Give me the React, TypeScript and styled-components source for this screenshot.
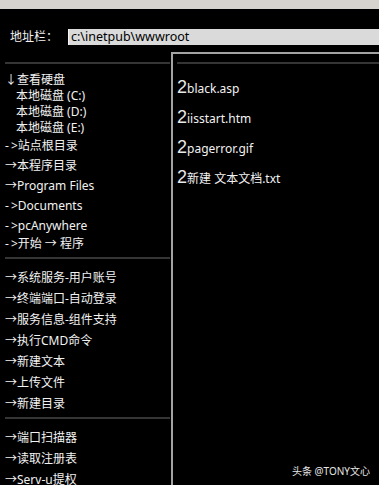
import React from "react";
import styled, { createGlobalStyle } from "styled-components";

const GlobalStyle = createGlobalStyle`
  html, body {
    margin: 0;
    padding: 0;
    background: #000;
    overflow: hidden;
  }
  body {
    font-family: "Noto Sans", "Noto Sans CJK SC", sans-serif;
    color: #f2f2f2;
  }
`;

const Page = styled.div`
  position: relative;
  width: 379px;
  height: 485px;
  background: #000;
  overflow: hidden;
`;

const TopStrip = styled.div`
  height: 9px;
  background: #d6d3ce;
`;

const AddressRow = styled.div`
  display: flex;
  align-items: center;
  margin-top: 20px;
  height: 16px;
  padding-left: 10px;
`;

const AddressLabel = styled.span`
  width: 58px;
  font-size: 12px;
  line-height: 16px;
  color: #f2f2f2;
`;

const AddressInput = styled.div`
  flex: 1;
  height: 16px;
  background: #dadada;
  border-left: 1px solid #f4f4f4;
  color: #000;
  font-size: 12.5px;
  line-height: 16px;
  padding-left: 2px;
  white-space: nowrap;
`;

const Main = styled.div`
  display: grid;
  grid-template-columns: 171px 1fr;
  margin-top: 7px;
  height: 433px;
`;

const LeftCol = styled.div`
  padding-top: 10px;
`;

const Divider = styled.div<{ $top: number }>`
  height: 2px;
  background: #353535;
  margin: ${(p) => p.$top}px 1px 0 5px;
`;

const Group = styled.div`
  padding-top: 8px;
`;

const Item = styled.div<{ $h: number; $indent?: number }>`
  height: ${(p) => p.$h}px;
  line-height: ${(p) => p.$h}px;
  padding-left: ${(p) => p.$indent ?? 5}px;
  font-size: 12px;
  color: #f2f2f2;
  white-space: nowrap;
`;

const Dash = styled.span`
  margin-right: 2px;
`;

const RightPane = styled.div`
  border-left: 2px solid #a3a3a3;
  border-top: 2px solid #a3a3a3;
  padding: 8px 0 0 4px;
`;

const InnerRule = styled.div`
  height: 2px;
  background: #353535;
`;

const FileList = styled.div`
  padding-top: 8px;
`;

const FileRow = styled.div`
  display: flex;
  align-items: baseline;
  height: 30px;
  line-height: 30px;
  font-size: 12px;
  color: #f2f2f2;
  white-space: nowrap;
`;

const FileGlyph = styled.span`
  font-family: "Liberation Sans", sans-serif;
  font-size: 18px;
  font-weight: 300;
  color: #e8e8e8;
`;

const Watermark = styled.div`
  position: absolute;
  right: 9px;
  bottom: 7px;
  font-size: 10px;
  color: #e6e6e6;
  white-space: nowrap;
`;

type Entry = { t: string; h: number; indent?: number; dash?: boolean };

const group1: Entry[] = [
  { t: "↓查看硬盘", h: 16 },
  { t: "本地磁盘 (C:)", h: 16, indent: 16 },
  { t: "本地磁盘 (D:)", h: 16, indent: 16 },
  { t: "本地磁盘 (E:)", h: 16, indent: 16 },
  { t: "站点根目录", h: 20, dash: true },
  { t: "→本程序目录", h: 20 },
  { t: "→Program Files", h: 20 },
  { t: "Documents", h: 20, dash: true },
  { t: "pcAnywhere", h: 20, dash: true },
  { t: "开始 → 程序", h: 16, dash: true },
];

const group2 = [
  "→系统服务-用户账号",
  "→终端端口-自动登录",
  "→服务信息-组件支持",
  "→执行CMD命令",
  "→新建文本",
  "→上传文件",
  "→新建目录",
];

const group3 = ["→端口扫描器", "→读取注册表", "→Serv-u提权"];

const files = ["black.asp", "iisstart.htm", "pagerror.gif", "新建 文本文档.txt"];

export default function App() {
  return (
    <>
      <GlobalStyle />
      <Page>
        <TopStrip />
        <AddressRow>
          <AddressLabel>地址栏：</AddressLabel>
          <AddressInput>c:\inetpub\wwwroot</AddressInput>
        </AddressRow>
        <Main>
          <LeftCol>
            <Divider $top={0} />
            <Group>
              {group1.map((it) => (
                <Item key={it.t} $h={it.h} $indent={it.indent}>
                  {it.dash && (
                    <>
                      <Dash>-</Dash>&gt;
                    </>
                  )}
                  {it.t}
                </Item>
              ))}
            </Group>
            <Divider $top={5} />
            <Group>
              {group2.map((t) => (
                <Item key={t} $h={21}>
                  {t}
                </Item>
              ))}
            </Group>
            <Divider $top={3} />
            <Group>
              {group3.map((t) => (
                <Item key={t} $h={21}>
                  {t}
                </Item>
              ))}
            </Group>
          </LeftCol>
          <RightPane>
            <InnerRule />
            <FileList>
              {files.map((f) => (
                <FileRow key={f}>
                  <FileGlyph>2</FileGlyph>
                  <span>{f}</span>
                </FileRow>
              ))}
            </FileList>
          </RightPane>
        </Main>
        <Watermark>头条 @TONY文心</Watermark>
      </Page>
    </>
  );
}
